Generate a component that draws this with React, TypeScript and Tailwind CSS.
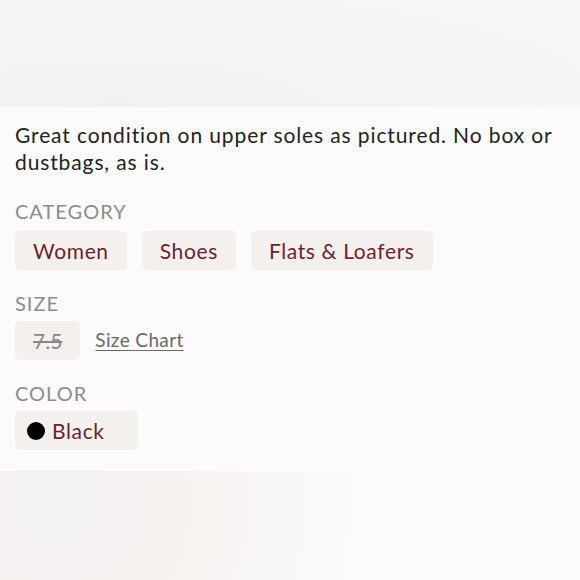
const font = { fontFamily: "Lato, 'Noto Sans', sans-serif" };

const Chip = ({ children, className = "" }: { children: React.ReactNode; className?: string }) => (
  <div
    className={`flex h-[39px] items-center rounded-[5px] bg-[#f3f0ee] px-[18px] text-[21px] tracking-[0.03em] text-[#6f1f2f] ${className}`}
  >
    {children}
  </div>
);

export default function App() {
  return (
    <div className="flex h-[580px] w-[580px] flex-col overflow-hidden bg-[#fcfafa]" style={font}>
      <div className="h-[107px] shrink-0 bg-[radial-gradient(ellipse_at_20%_100%,#f2f1f1_0%,#f5f4f4_45%,#f8f7f7_100%)]" />

      <div className="shrink-0 px-[15px] pb-[21px] pt-[14px]">
        <p className="text-[21px] leading-[27px] tracking-[0.042em] text-[#222]">
          Great condition on upper soles as pictured. No box or dustbags, as is.
        </p>

        <div className="mt-[24px] text-[20px] leading-[24px] tracking-[0.05em] text-[#8e8c8b]">CATEGORY</div>
        <div className="mt-[8px] flex gap-[15px]">
          <Chip>Women</Chip>
          <Chip>Shoes</Chip>
          <Chip>Flats &amp; Loafers</Chip>
        </div>

        <div className="mt-[21px] text-[20px] leading-[24px] tracking-[0.05em] text-[#8e8c8b]">SIZE</div>
        <div className="mt-[6px] flex items-center gap-[15px]">
          <Chip className="h-[38px] px-[13px] tracking-normal text-[#8a8786] line-through decoration-[#8a8786]">7.5</Chip>
          <a className="text-[19px] tracking-[0.02em] text-[#6b6968] underline underline-offset-[3px]">Size Chart</a>
        </div>

        <div className="mt-[21px] text-[20px] leading-[24px] tracking-[0.05em] text-[#8e8c8b]">COLOR</div>
        <div className="mt-[6px] flex">
          <Chip className="gap-[7px] pl-[12px] pr-[33px]">
            <span className="h-[18px] w-[18px] rounded-full bg-black" />
            Black
          </Chip>
        </div>
      </div>

      <div className="flex-1 bg-[radial-gradient(circle_at_10%_30%,#f3f1f1_0%,#f6f2f0_25%,#f9f7f7_45%,#fcfafa_60%)]" />
    </div>
  );
}
